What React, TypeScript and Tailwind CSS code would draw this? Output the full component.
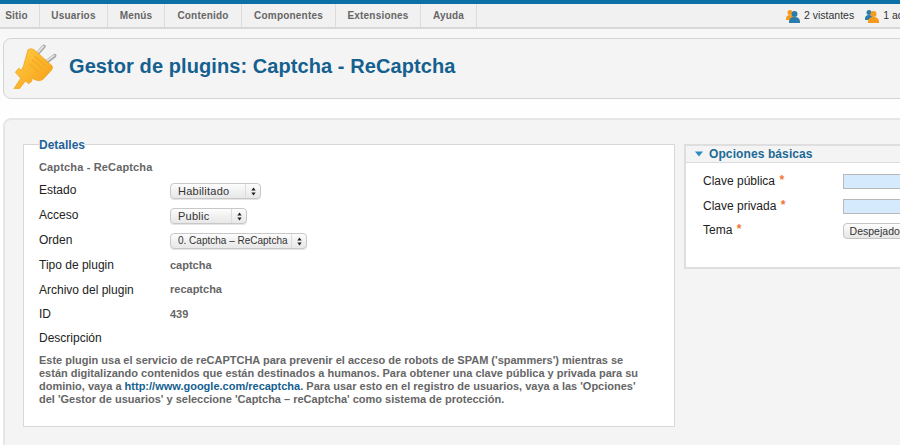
import React from "react";

const Sel = ({ text, w, size = "text-[11px] tracking-[0.25px]" }: { text: string; w: string; size?: string }) => (
  <div className={`${w} h-[16px] flex items-stretch rounded-[4px] border border-[#c8c8c8] shadow-[0_1px_0_#e4e4e4] bg-gradient-to-b from-[#fdfdfd] via-[#f1f1f1] to-[#e8e8e8] ${size} text-[#333] leading-[14px]`}>
    <span className="flex-1 min-w-0 pl-[7px] whitespace-nowrap overflow-hidden">{text}</span>
    <span className="w-[15px] shrink-0 flex flex-col items-center justify-center border-l border-[#dcdcdc]">
      <svg width="5" height="9" viewBox="0 0 5 9"><path d="M2.5 0.5 L4.7 3.6 H0.3Z M2.5 8.5 L4.7 5.4 H0.3Z" fill="#222" /></svg>
    </span>
  </div>
);

const Row = ({ label, children, h }: { label: string; children?: React.ReactNode; h: string }) => (
  <div className={`flex items-start ${h}`}>
    <div className="w-[131px] pt-[1px] text-[12px] leading-[14px] text-[#222]">{label}</div>
    {children}
  </div>
);

const Val = ({ t, top = "mt-[1px]" }: { t: string; top?: string }) => (
  <div className={`${top} text-[11px] leading-[14px] font-bold text-[#666]`}>{t}</div>
);

const Star = () => <span className="text-[#ee7733] text-[12px] font-bold ml-[1px] relative top-[-1px]">*</span>;

const Plug = () => (
  <svg className="shrink-0" width="46" height="46" viewBox="36 20 138 138">
    <defs>
      <linearGradient id="pg" x1="0" y1="0" x2="1" y2="1">
        <stop offset="0" stopColor="#ffcf45" />
        <stop offset="1" stopColor="#f59a12" />
      </linearGradient>
    </defs>
    <path d="M112 52 L132 30" stroke="#aaaaaa" strokeWidth="11" strokeLinecap="round" />
    <path d="M140 76 L164 58" stroke="#aaaaaa" strokeWidth="11" strokeLinecap="round" />
    <path d="M112 50 L131 29" stroke="#f0f0f0" strokeWidth="4" />
    <path d="M140 74 L163 57" stroke="#f0f0f0" strokeWidth="4" />
    <path d="M84 40 Q92 34 102 40 L156 88 Q160 94 154 102 L130 128 Q122 136 110 132 L94 126 L96 134 L86 142 L76 134 L50 168 Q42 170 40 160 L62 126 L46 108 L56 96 L64 102 L70 90 Z" fill="url(#pg)" stroke="#ee9a14" strokeWidth="2" strokeLinejoin="round" />
    <path d="M96 70 L126 96 M88 82 L116 108 M104 60 L136 88" stroke="#f4a922" strokeWidth="4" />
  </svg>
);

const Person = ({ a, b }: { a: string; b: string }) => (
  <svg className="shrink-0" width="14" height="14" viewBox="0 0 14 14">
    <circle cx="4" cy="3.5" r="2.5" fill={a} />
    <path d="M0 10 Q0 6 4 6 Q8 6 8 10 L8 11 H0Z" fill={a} />
    <circle cx="8.5" cy="5" r="3" fill={b} />
    <path d="M3 13 Q3 8 8.5 8 Q14 8 14 13 L14 14 H3Z" fill={b} />
  </svg>
);

export default function App() {
  const menu = ["Sitio", "Usuarios", "Menús", "Contenido", "Componentes", "Extensiones", "Ayuda"];
  const widths = ["w-[40px]", "w-[68px]", "w-[57px]", "w-[77px]", "w-[94px]", "w-[85px]", "w-[56px]"];
  return (
    <div className="w-[900px] h-[445px] overflow-hidden bg-white font-['Liberation_Sans',Arial,sans-serif]">
      <div className="h-[4px] bg-[#0b70a6]" />
      <div className="h-[25px] flex justify-between bg-[#f1f1f1] border-b-2 border-[#d8d8d8]">
        <div className="flex">
          {menu.map((m, i) => (
            <div key={m} className={`${widths[i]} border-r border-[#dcdcdc] flex items-center justify-center text-[10px] font-bold text-[#666] tracking-[0.2px] ${i === 0 ? "pr-[6px]" : ""}`}>
              {m}
            </div>
          ))}
        </div>
        <div className="flex items-center text-[10.5px] text-[#333] whitespace-nowrap w-[114px] overflow-hidden shrink-0">
          <Person a="#f59a1c" b="#2a7cab" />
          <span className="ml-[4px]">2 vistantes</span>
          <span className="ml-[11px] shrink-0"><Person a="#2a7cab" b="#f59a1c" /></span>
          <span className="ml-[4px]">1 ad</span>
        </div>
      </div>
      <div className="pl-[3px] pt-[9px] bg-gradient-to-b from-[#f7f7f7] to-white h-[89px]">
        <div className="w-[920px] h-[61px] rounded-l-[8px] border border-[#d4d4d4] bg-[#f4f4f4] flex items-center pl-[8px] pb-[5px]">
          <Plug />
          <h1 className="ml-[11px] text-[20px] font-bold text-[#14608f] whitespace-nowrap tracking-[0.08px]">Gestor de plugins: Captcha - ReCaptcha</h1>
        </div>
      </div>
      <div className="ml-[3px] w-[920px] h-[340px] rounded-l-[8px] border-2 border-[#e6e6e6] bg-[#f4f4f4] pl-[18px] pt-[24px] flex items-start">
        <div className="relative w-[652px] h-[283px] bg-white border border-[#d8d8d8] pl-[15px] pt-[15px]">
          <span className="absolute left-[15px] top-[-7px] text-[12px] leading-[14px] font-bold text-[#1f6399] bg-gradient-to-b from-[#f4f4f4] to-white">Detalles</span>
          <div className="text-[11px] leading-[14px] font-bold text-[#666] h-[22px] tracking-[0.15px]">Captcha - ReCaptcha</div>
          <Row label="Estado" h="h-[25px]"><div className="mt-[1px]"><Sel text="Habilitado" w="w-[91px]" /></div></Row>
          <Row label="Acceso" h="h-[25px]"><div className="mt-[1px]"><Sel text="Public" w="w-[77px]" /></div></Row>
          <Row label="Orden" h="h-[25px]"><div className="mt-[1px]"><Sel text="0. Captcha – ReCaptcha" w="w-[137px]" size="text-[10px]" /></div></Row>
          <Row label="Tipo de plugin" h="h-[25px]"><Val t="captcha" /></Row>
          <Row label="Archivo del plugin" h="h-[24px]"><Val t="recaptcha" top="mt-0" /></Row>
          <Row label="ID" h="h-[24px]"><Val t="439" /></Row>
          <Row label="Descripción" h="h-[24px]" />
          <p className="w-[610px] text-[11px] leading-[13px] font-bold text-[#666]">
            Este plugin usa el servicio de reCAPTCHA para prevenir el acceso de robots de SPAM ('spammers') mientras se están digitalizando contenidos que están destinados a humanos. Para obtener una clave pública y privada para su dominio, vaya a <span className="text-[#14608f]">http://www.google.com/recaptcha</span>. Para usar esto en el registro de usuarios, vaya a las 'Opciones' del 'Gestor de usuarios' y seleccione 'Captcha – reCaptcha' como sistema de protección.
          </p>
        </div>
        <div className="ml-[9px] w-[230px] h-[125px] bg-white border-2 border-[#dedede]">
          <div className="h-[17px] bg-[#f4f4f4] border-b border-[#dcdcdc] flex items-center pl-[9px]">
            <svg width="8" height="6" viewBox="0 0 8 6"><path d="M0 0.5 H8 L4 5.5Z" fill="#2a8cc4" /></svg>
            <span className="ml-[6px] text-[12px] font-bold text-[#1b6a97] tracking-[0.1px]">Opciones básicas</span>
          </div>
          <div className="pl-[17px] pt-[11px] text-[12px] text-[#222] leading-[14px]">
            <div className="flex h-[25px]">
              <div className="w-[140px]">Clave pública <Star /></div>
              <div className="w-[70px] h-[15px] ml-[1px] bg-[#d5eafd] border border-[#b8b8b8]" />
            </div>
            <div className="flex h-[24px]">
              <div className="w-[140px]">Clave privada <Star /></div>
              <div className="w-[70px] h-[15px] ml-[1px] bg-[#d5eafd] border border-[#b8b8b8]" />
            </div>
            <div className="flex">
              <div className="w-[140px]">Tema <Star /></div>
              <div className="w-[70px] h-[16px] ml-[1px] rounded-l-[4px] border border-[#c4c4c4] bg-gradient-to-b from-[#fdfdfd] to-[#e6e6e6] text-[10.5px] text-[#333] pl-[6px] whitespace-nowrap overflow-hidden">Despejado</div>
            </div>
          </div>
        </div>
      </div>
    </div>
  );
}
